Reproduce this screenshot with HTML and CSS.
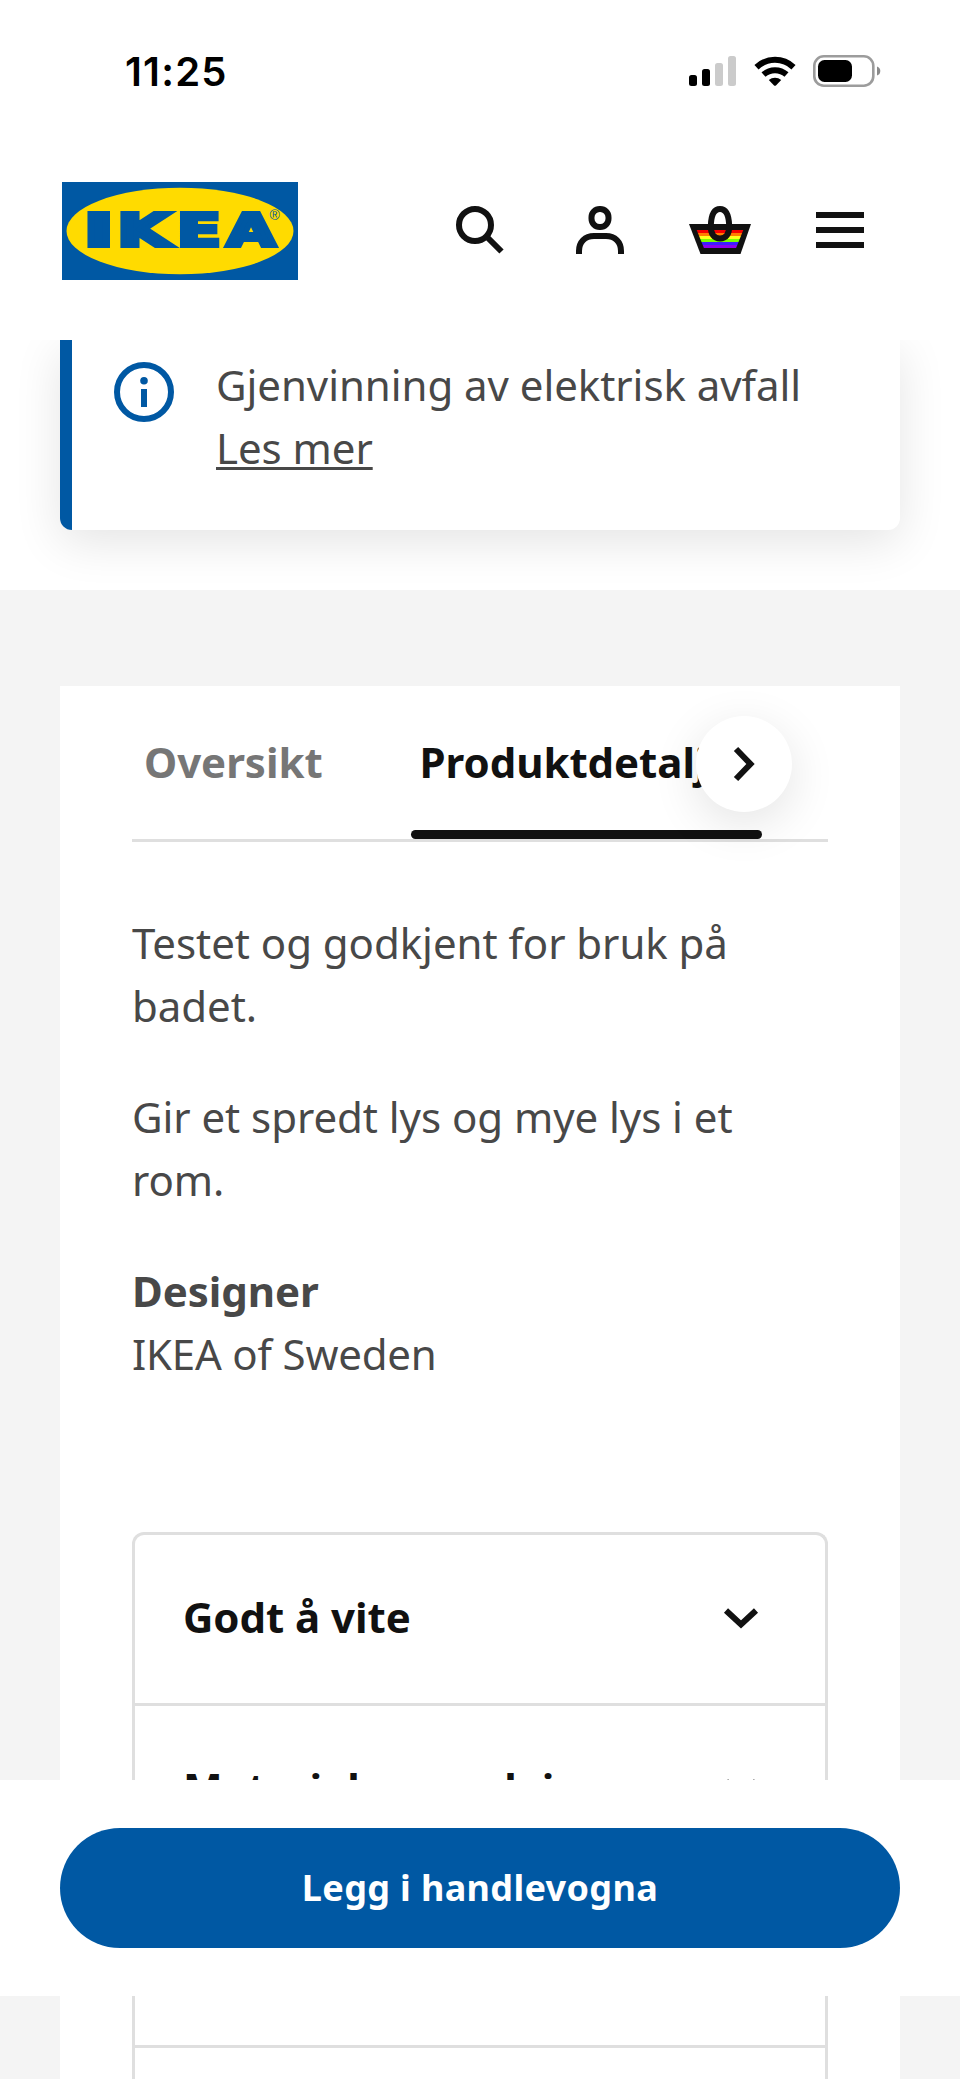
FILE: index.html
```html
<!DOCTYPE html>
<html lang="no">
<head>
    <meta charset="UTF-8">
    <title>IKEA</title>
    <link rel="stylesheet" href="styles.css">
</head>
<body>
<header class="header">
    <div class="status">
        <span class="time">11:25</span>
        <svg class="status-icons" width="192" height="34" viewBox="689 54 192 34">
            <rect x="689" y="75" width="8" height="11" rx="2.5"/>
            <rect x="702" y="69" width="8" height="17" rx="2.5"/>
            <rect x="715" y="63" width="8" height="23" rx="2.5" fill="#cbcbcb"/>
            <rect x="728" y="56" width="8" height="30" rx="2.5" fill="#cbcbcb"/>
            <g fill="none" stroke="#000" stroke-width="6">
                <path d="M756.5 67.2a27 27 0 0 1 37 0"/>
                <path d="M763.5 74.6a17.2 17.2 0 0 1 23 0"/>
            </g>
            <path d="M768.8 80a9.3 9.3 0 0 1 12.4 0l-5 5.2q-1.2 1.2-2.4 0z"/>
            <rect x="814.3" y="56.3" width="59" height="29.4" rx="9.5" fill="none" stroke="#9c9c9c" stroke-width="2.6"/>
            <rect x="818" y="60" width="34" height="22" rx="6.5"/>
            <path d="M877 66.5q3.3 1 3.3 4.5t-3.3 4.5z" fill="#8a8a8a"/>
        </svg>
    </div>
    <div class="nav">
        <svg class="logo" width="236" height="98" viewBox="62 182 236 98">
            <rect x="62" y="182" width="236" height="98" fill="#0058a3"/>
            <ellipse cx="180" cy="231" rx="113.5" ry="43.3" fill="#ffdb00"/>
            <g class="logo-text">
                <text transform="translate(83.7 246) scale(1.84 1)">I</text>
                <text transform="translate(117.3 246) scale(1.56 1)">K</text>
                <text transform="translate(177 246) scale(1.47 1)">E</text>
                <text transform="translate(226.7 246) scale(1.43 1)">A</text>
            </g>
            <text class="logo-reg" x="269.5" y="219.5">®</text>
        </svg>
        <div class="nav-icons">
            <svg width="72" height="72" viewBox="444 194 72 72">
                <circle cx="475" cy="225" r="16"/>
                <path d="M486.5 236.5l15 15"/>
            </svg>
            <svg width="72" height="72" viewBox="564 194 72 72">
                <rect x="591.5" y="209" width="17" height="18" rx="8.2"/>
                <path d="M579 254v-3c0-9 6-15 15-15h12c9 0 15 6 15 15v3"/>
            </svg>
            <svg width="72" height="72" viewBox="684 194 72 72">
                <path class="basket" d="M689 224h62l-10.5 30h-40z"/>
                <path class="stripe" fill="#f50000" d="M696.7 230h46.6l-1.2 3h-44.2z"/>
                <path class="stripe" fill="#ff7d00" d="M697.9 233h44.2l-1.2 3h-41.8z"/>
                <path class="stripe" fill="#ffff1e" d="M699.1 236h41.8l-1.2 3h-39.4z"/>
                <path class="stripe" fill="#7dff00" d="M700.3 239h39.4l-1.2 3h-37z"/>
                <path class="stripe" fill="#3c1eff" d="M701.5 242h37l-1.2 3h-34.6z"/>
                <path class="stripe" fill="#8c00f0" d="M702.7 245h34.6l-1.2 3h-32.2z"/>
                <path class="handle" d="M710.8 226c.3-10 3.2-17 9.2-17s8.9 7 9.2 17c.2 8-3.2 12.5-9.2 12.5s-9.4-4.5-9.2-12.5z"/>
            </svg>
            <svg width="72" height="72" viewBox="804 194 72 72">
                <path d="M816 215h48M816 230h48M816 245h48"/>
            </svg>
        </div>
    </div>
</header>

<section class="notice-wrap">
    <div class="notice">
        <svg class="info" width="60" height="60" viewBox="0 0 60 60">
            <circle cx="30" cy="30" r="27" fill="none" stroke="#0058a3" stroke-width="6"/>
            <circle cx="30" cy="18.7" r="3.8" fill="#0058a3"/>
            <rect x="27" y="27" width="6" height="18" fill="#0058a3"/>
        </svg>
        <p>Gjenvinning av elektrisk avfall<br><a class="more">Les mer</a></p>
    </div>
</section>

<main class="details">
    <div class="card">
        <div class="tabs">
            <div class="tab">Oversikt</div>
            <div class="tab active">Produktdetaljer</div>
            <div class="next">
                <svg width="72" height="72" viewBox="0 0 72 72">
                    <path d="M28 21l14.5 15L28 51"/>
                </svg>
            </div>
        </div>
        <div class="text">
            <p>Testet og godkjent for bruk på badet.</p>
            <p>Gir et spredt lys og mye lys i et rom.</p>
            <p><b>Designer</b><br><span class="designer">IKEA of Sweden</span></p>
        </div>
        <ul class="accordion">
            <li>
                <span>Godt å vite</span>
                <svg width="36" height="24" viewBox="0 0 36 24"><path d="M3 3.500l15 14L33 3.500"/></svg>
            </li>
            <li>
                <span>Materialer og pleie</span>
                <svg width="36" height="24" viewBox="0 0 36 24"><path d="M3 3.500l15 14L33 3.500"/></svg>
            </li>
            <li></li>
        </ul>
    </div>
</main>

<div class="buy">
    <button class="buy-btn">Legg i handlevogna</button>
</div>
</body>
</html>
```
FILE: styles.css
```css
html, body, ul, p {
    margin: 0;
    padding: 0;
}
body {
    height: 2079px;
    overflow: hidden;
    background: #fff;
    color: #484848;
    font-family: "Noto Sans", sans-serif;
    font-size: 42px;
    line-height: 63px;
    letter-spacing: -.05px;
}
.header {
    height: 340px;
    background: #fff;
    position: relative;
    z-index: 2;
}
.status {
    display: flex;
    justify-content: space-between;
    align-items: center;
    height: 34px;
    padding: 54px 79px 0 125px;
}
.time {
    color: #000;
    font-family: Inter, sans-serif;
    font-size: 40px;
    font-weight: 600;
    letter-spacing: 1.2px;
}
.nav {
    display: flex;
    justify-content: space-between;
    height: 98px;
    padding: 94px 84px 0 62px;
}
.logo-text {
    fill: #0058a3;
    stroke: #0058a3;
    stroke-width: 4px;
    font-family: "DejaVu Sans", sans-serif;
    font-size: 43.9px;
    font-weight: bold;
}
.logo-reg {
    fill: #0058a3;
    font-family: "Liberation Sans", sans-serif;
    font-size: 14px;
}
.nav-icons {
    display: flex;
    gap: 48px;
    padding-top: 12px;
}
.nav-icons svg {
    fill: none;
    stroke: #111;
    stroke-width: 6px;
}
.nav-icons .basket {
    fill: #111;
    stroke: none;
}
.nav-icons .stripe {
    stroke: none;
}
.notice-wrap {
    height: 250px;
    padding: 0 60px;
    background: #fff;
    box-sizing: border-box;
}
.notice {
    display: flex;
    height: 190px;
    padding: 13px 42px 0;
    box-sizing: border-box;
    background: #fff;
    border-left: 12px solid #0058a3;
    border-radius: 0 0 12px 12px;
    box-shadow: 0 12px 48px rgba(0, 0, 0, .11);
}
.info {
    margin: 9px 42px 0 0;
}
.more {
    text-decoration: underline;
    text-decoration-thickness: 3px;
    text-underline-offset: 3px;
    text-decoration-skip-ink: none;
}
.details {
    position: relative;
    height: 1489px;
    padding: 96px 60px 0;
    box-sizing: border-box;
    background: #f4f4f4;
}
.card {
    height: 1393px;
    padding: 0 72px;
    box-sizing: border-box;
    overflow: hidden;
    background: #fff;
}
.tabs {
    display: flex;
    position: relative;
    height: 153px;
    border-bottom: 3px solid #dfdfdf;
}
.tab {
    padding: 44px 6px 0;
    margin: 0 82px 0 6px;
    color: #767676;
    font-weight: bold;
}
.tab.active {
    width: 336px;
    padding-left: 9px;
    margin: 0;
    color: #111;
    position: relative;
}
.tab.active::after {
    content: "";
    position: absolute;
    left: 0;
    bottom: 0;
    width: 351px;
    height: 9px;
    border-radius: 5px;
    background: #111;
}
.next {
    position: absolute;
    right: 36px;
    top: 30px;
    display: flex;
    align-items: center;
    justify-content: center;
    width: 96px;
    height: 96px;
    border-radius: 50%;
    background: #fff;
    box-shadow: 0 12px 48px rgba(0, 0, 0, .11);
}
.next svg, .accordion svg {
    fill: none;
    stroke: #111;
    stroke-width: 6px;
}
.text {
    padding-top: 69px;
}
.text p {
    margin-bottom: 48px;
}
.text .designer {
    letter-spacing: -.2px;
}
.accordion {
    height: 560px;
    margin-top: 147px;
    border: 3px solid #dfdfdf;
    border-bottom: none;
    border-radius: 12px 12px 0 0;
    list-style: none;
}
.accordion li {
    display: flex;
    align-items: center;
    justify-content: space-between;
    height: 168px;
    padding: 0 66px 0 48px;
    border-bottom: 3px solid #dfdfdf;
    color: #111;
    font-weight: bold;
}
.accordion span {
    padding-bottom: 6px;
}
.buy {
    position: fixed;
    left: 0;
    right: 0;
    top: 1780px;
    height: 216px;
    padding: 48px 60px;
    box-sizing: border-box;
    background: #fff;
}
.buy-btn {
    width: 100%;
    height: 120px;
    padding-bottom: 3px;
    border: none;
    border-radius: 60px;
    background: #0058a3;
    color: #fff;
    font-family: "Noto Sans", sans-serif;
    font-size: 36px;
    font-weight: bold;
    letter-spacing: .35px;
}
```
